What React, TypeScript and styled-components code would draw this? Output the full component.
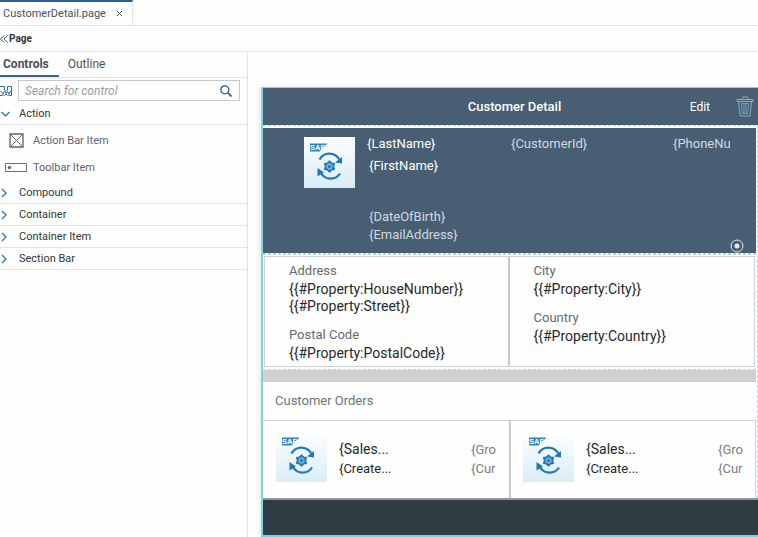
import React from "react";
import styled, { createGlobalStyle } from "styled-components";

const GlobalStyle = createGlobalStyle`
  *, *::before, *::after { box-sizing: border-box; }
  body { margin: 0; background: #fefefe; font-family: Roboto, "Liberation Sans", sans-serif; }
  button { margin: 0; padding: 0; border: 0; background: none; font: inherit; color: inherit; text-align: left; cursor: pointer; }
  h1, h2, p, dl, dt, dd, ul { margin: 0; padding: 0; font: inherit; list-style: none; }
`;

const line = "#dfe3ea";
const cyan = "#74d8e9";
const slate = "#475e73";

const Page = styled.div`
  min-height: 100vh;
  display: flex;
  flex-direction: column;
  color: #32363a;
  font-size: 11px;
  line-height: 16px;
`;

const FileTabs = styled.div`
  display: flex;
  height: 26px;
  border-bottom: 1px solid ${line};
`;

const FileTab = styled.div`
  display: flex;
  align-items: center;
  gap: 10px;
  padding: 0 9px 0 3px;
  border-top: 2px solid #2d5f8b;
  border-right: 1px solid ${line};
  color: #4b5057;
  svg { display: block; }
`;

const FileName = styled.button`
  font-size: 11px;
`;

const PageBar = styled.div`
  display: flex;
  align-items: center;
  height: 26px;
  border-bottom: 1px solid ${line};
  svg { display: block; }
`;

const PageTitle = styled.h1`
  padding-left: 1px;
  font-size: 10px;
  font-weight: 700;
`;

const Workspace = styled.div`
  flex: 1;
  display: flex;
`;

const Sidebar = styled.aside`
  flex: 0 0 auto;
  width: 248px;
  border-right: 1px solid ${line};
`;

const PanelTabs = styled.div`
  display: flex;
  gap: 9px;
  height: 26px;
  border-bottom: 1px solid ${line};
`;

const PanelTab = styled.button<{ $active?: boolean }>`
  padding: 0 ${(p) => (p.$active ? 10 : 0)}px 0 ${(p) => (p.$active ? 3 : 0)}px;
  border-bottom: 2px solid ${(p) => (p.$active ? "#3d6585" : "transparent")};
  font-size: 12px;
  font-weight: ${(p) => (p.$active ? 700 : 400)};
  color: #4b5057;
`;

const SearchRow = styled.div`
  display: flex;
  align-items: center;
  gap: 6px;
  padding: 2px 7px 2px 0;
  svg { display: block; flex: none; }
`;

const SearchBox = styled.label`
  flex: 1;
  display: flex;
  align-items: center;
  height: 21px;
  padding: 0 7px 0 6px;
  border: 1px solid #c3c7ce;
  background: #fff;
`;

const SearchInput = styled.input`
  flex: 1;
  min-width: 0;
  padding: 0;
  border: 0;
  outline: 0;
  background: none;
  font: italic 12px/16px Roboto, sans-serif;
  color: #32363a;
  &::placeholder { color: #9a9da2; opacity: 1; }
`;

const GroupButton = styled.button`
  display: flex;
  align-items: center;
  gap: 7px;
  width: 100%;
  height: 22px;
  border-bottom: 1px solid ${line};
  svg { display: block; }
`;

const ItemButton = styled.button`
  display: grid;
  grid-template-columns: 22px 1fr;
  align-items: center;
  gap: 6px;
  width: 100%;
  height: 27px;
  padding-left: 5px;
  color: #5f6368;
  svg { display: block; justify-self: center; }
`;

const ItemList = styled.ul`
  padding: 2px 0 1px;
`;

const Canvas = styled.main`
  flex: 1;
  min-width: 0;
  padding: 35px 0 0 13px;
`;

const Device = styled.section`
  border: solid ${cyan};
  border-width: 1px 0 2px 2px;
  box-shadow: -2px 0 4px rgba(0, 0, 0, 0.08);
  background: #fefefe;
  color: #26292c;
  font-size: 13px;
  line-height: 18px;
`;

const ActionBar = styled.header`
  display: grid;
  grid-template-columns: 1fr auto 1fr;
  align-items: center;
  height: 37px;
  padding: 0 4px 0 12px;
  background: ${slate};
  color: #fff;
`;

const BarTitle = styled.h2`
  grid-column: 2;
  font-size: 13px;
  font-weight: 500;
`;

const BarActions = styled.div`
  display: flex;
  align-items: center;
  justify-content: flex-end;
  gap: 26px;
  font-size: 12px;
  svg { display: block; }
`;

const DeviceBody = styled.div`
  border-right: 1px dashed #b5d9e8;
  padding-right: 1px;
`;

const DropZone = styled.div<{ $top?: number }>`
  padding-top: ${(p) => p.$top ?? 1}px;
  border: dashed #b9d5e0;
  border-width: 1px 0;
`;

const ObjectHeader = styled.div`
  position: relative;
  display: grid;
  grid-template-columns: 52px 133px 151px 57px;
  column-gap: 11px;
  min-height: 125px;
  padding: 7px 0 0 41px;
  background: ${slate};
  color: #d3d9df;
`;

const Tile = styled.div<{ $short?: boolean }>`
  width: 51px;
  height: ${(p) => (p.$short ? 46 : 51)}px;
  margin-top: 2px;
  overflow: hidden;
  background: linear-gradient(#fbfdfe, #d9edf6);
  svg { display: block; }
`;

const HeaderText = styled.div`
  white-space: nowrap;
`;

const Name = styled.p`
  color: #fff;
`;

const Details = styled.div`
  padding: 4px 0 0 2px;
`;

const Clipped = styled.p`
  overflow: hidden;
  white-space: nowrap;
`;

const Contact = styled.div`
  padding-top: 33px;
`;

const Target = styled.button`
  position: absolute;
  right: 12px;
  bottom: 0;
  svg { display: block; }
`;

const Facets = styled.div`
  display: grid;
  grid-template-columns: 1fr 1fr;
  margin: 0 1px 2px;
  border: 1px solid #cfd1d4;
`;

const Facet = styled.dl`
  padding: 4px 4px 4px 24px;
  &:first-child { border-right: 2px solid #c8c9cb; }
`;

const FacetLabel = styled.dt`
  line-height: 20px;
  color: #66696d;
`;

const FacetValue = styled.dd`
  font-size: 14px;
  line-height: 17px;
  & + dt { margin-top: 10px; }
`;

const Divider = styled.div`
  height: 12px;
  background: #d0d0d3;
`;

const SectionTitle = styled.h2`
  padding: 10px 12px;
  color: #707377;
`;

const Orders = styled.div`
  display: grid;
  grid-template-columns: 1fr 1fr;
  border: 1px solid #cfd1d4;
  border-width: 1px 1px 0 0;
`;

const Order = styled.article`
  display: grid;
  grid-template-columns: 51px 1fr auto;
  column-gap: 12px;
  padding: 13px 13px 16px 13px;
  & + & { border-left: 2px solid #c8c9cb; padding: 13px 12px 16px 12px; }
`;

const OrderText = styled.div<{ $muted?: boolean }>`
  padding-top: 6px;
  color: ${(p) => (p.$muted ? "#7b7d80" : "#26292c")};
`;

const OrderLine = styled.p<{ $lead?: boolean }>`
  font-size: ${(p) => (p.$lead ? 14 : 13)}px;
  line-height: 19px;
`;

const Toolbar = styled.footer`
  height: 37px;
  border-top: 2px solid #8a98a3;
  background: #303d45;
`;

function SapTile({ short }: { short?: boolean }) {
  return (
    <Tile $short={short}>
      <svg width="51" height="51" viewBox={short ? "0 5 51 51" : "0 0 51 51"} role="img" aria-label="SAP">
        <path d="M6 6.500H23.500L15.500 14.500H6Z" fill="#2b83c0" />
        <text x="6" y="13.300" fontFamily="Liberation Sans, sans-serif" fontSize="7.500" fontWeight="700" fill="#fff">SAP</text>
        <g fill="none" stroke="#2077b4" strokeWidth="2.200">
          <path d="M15.500 22.500C20 15 30 14.500 35.500 22.500" />
          <path d="M36 36.500C32 43 21.500 44 16.500 35.500" />
        </g>
        <path d="M38 20V26.500L31 25.500Z" fill="#2077b4" />
        <path d="M13.500 31L20 35.500L13.500 39.500Z" fill="#2077b4" />
        <path d="M25.500 25L29.500 27.200V31.800L25.500 34L21.500 31.800V27.200Z" fill="#77b3db" stroke="#2077b4" strokeWidth="1.800" />
        <circle cx="25.500" cy="29.500" r="1.500" fill="#2077b4" />
        <g fill="#2077b4">
          <circle cx="25.500" cy="24.800" r="1.300" /><circle cx="25.500" cy="34.200" r="1.300" />
          <circle cx="21.300" cy="27" r="1.300" /><circle cx="29.700" cy="27" r="1.300" />
          <circle cx="21.300" cy="32" r="1.300" /><circle cx="29.700" cy="32" r="1.300" />
        </g>
      </svg>
    </Tile>
  );
}

function Chevron({ open }: { open?: boolean }) {
  return (
    <svg width="12" height="12" viewBox="0 0 12 12" fill="none" stroke="#2f6c9c" strokeWidth="1.200">
      <path d={open ? "M1.500 4L5.500 8L9.500 4" : "M2 2L6 6L2 10"} />
    </svg>
  );
}

const Group = ({ label, open }: { label: string; open?: boolean }) => (
  <GroupButton aria-expanded={!!open}>
    <Chevron open={open} />
    {label}
  </GroupButton>
);

const orders = [1, 2];

export default function App() {
  return (
    <Page>
      <GlobalStyle />
      <FileTabs>
        <FileTab>
          <FileName>CustomerDetail.page</FileName>
          <button aria-label="Close">
            <svg width="7" height="7" viewBox="0 0 7 7" stroke="#4b5057"><path d="M1 1L6 6M6 1L1 6" /></svg>
          </button>
        </FileTab>
      </FileTabs>
      <PageBar>
        <button aria-label="Collapse">
          <svg width="8" height="8" viewBox="0 0 8 8" fill="none" stroke="#4b5057"><path d="M4 0.500L0.500 4L4 7.500M7.500 0.500L4 4L7.500 7.500" /></svg>
        </button>
        <PageTitle>Page</PageTitle>
      </PageBar>
      <Workspace>
        <Sidebar>
          <PanelTabs role="tablist">
            <PanelTab role="tab" aria-selected $active>Controls</PanelTab>
            <PanelTab role="tab" aria-selected={false}>Outline</PanelTab>
          </PanelTabs>
          <SearchRow>
            <button aria-label="Control catalog">
              <svg width="12" height="12" viewBox="0 0 12 12" fill="none" stroke="#2f6c9c">
                <path d="M0 1.500H4.500V5L6 6.500L7.500 5V1.500H11.500V10.500H9.500M0 10.500H2M0.500 6L3 8.500L4.500 6.500L6 8.500L7.500 6.500L9 8.500L11 6M3 8V11M9 8V11M4.500 10.500L6 9L7.500 10.500" />
              </svg>
            </button>
            <SearchBox>
              <SearchInput type="text" placeholder="Search for control" aria-label="Search for control" />
              <svg width="12" height="12" viewBox="0 0 12 12" fill="none" stroke="#25567f" strokeWidth="1.300"><circle cx="4.800" cy="4.800" r="4" /><path d="M7.800 7.800L11.500 11.500" strokeWidth="1.600" /></svg>
            </SearchBox>
          </SearchRow>
          <Group label="Action" open />
          <ItemList>
            <li>
              <ItemButton>
                <svg width="15" height="15" viewBox="0 0 15 15" fill="none" stroke="#5f6368"><path d="M1 1H14V14H1Z" strokeWidth="1.300" /><path d="M1.500 1.500L13.500 13.500M13.500 1.500L1.500 13.500" /></svg>
                Action Bar Item
              </ItemButton>
            </li>
            <li>
              <ItemButton>
                <svg width="22" height="9" viewBox="0 0 22 9" fill="none" stroke="#6c7075"><path d="M0.500 0.500H21.500V8.500H0.500Z" /><circle cx="4.500" cy="4.500" r="1.300" fill="#5f6368" /></svg>
                Toolbar Item
              </ItemButton>
            </li>
          </ItemList>
          <Group label="Compound" />
          <Group label="Container" />
          <Group label="Container Item" />
          <Group label="Section Bar" />
        </Sidebar>
        <Canvas>
          <Device>
            <ActionBar>
              <BarTitle>Customer Detail</BarTitle>
              <BarActions>
                <button>Edit</button>
                <button aria-label="Delete">
                  <svg width="18" height="21" viewBox="0 0 18 21" fill="none" stroke="#8fa9bf">
                    <path d="M1 3.500H17V5.500H1ZM5.500 3.500L6.500 1H11.500L12.500 3.500M2.500 5.500L4 20H14L15.500 5.500" />
                    <path d="M5.500 7.500L6.200 17.500H11.800L12.500 7.500ZM8 7.500V17.500M10 7.500V17.500" stroke="#6f9dc6" />
                  </svg>
                </button>
              </BarActions>
            </ActionBar>
            <DeviceBody>
              <DropZone $top={2}>
                <ObjectHeader>
                  <SapTile />
                  <HeaderText>
                    <Name>{"{LastName}"}</Name>
                    <Details>
                      <Name>{"{FirstName}"}</Name>
                      <Contact>
                        <p>{"{DateOfBirth}"}</p>
                        <p>{"{EmailAddress}"}</p>
                      </Contact>
                    </Details>
                  </HeaderText>
                  <Clipped>{"{CustomerId}"}</Clipped>
                  <Clipped>{"{PhoneNu"}</Clipped>
                  <Target aria-label="Drop target">
                    <svg width="14" height="14" viewBox="0 0 14 14" fill="none" stroke="#e3e8ec"><circle cx="7" cy="7" r="6" /><circle cx="7" cy="7" r="2.500" fill="#e3e8ec" stroke="none" /></svg>
                  </Target>
                </ObjectHeader>
              </DropZone>
              <DropZone>
                <Facets>
                  <Facet>
                    <FacetLabel>Address</FacetLabel>
                    <FacetValue>{"{{#Property:HouseNumber}}"}</FacetValue>
                    <FacetValue>{"{{#Property:Street}}"}</FacetValue>
                    <FacetLabel>Postal Code</FacetLabel>
                    <FacetValue>{"{{#Property:PostalCode}}"}</FacetValue>
                  </Facet>
                  <Facet>
                    <FacetLabel>City</FacetLabel>
                    <FacetValue>{"{{#Property:City}}"}</FacetValue>
                    <FacetLabel>Country</FacetLabel>
                    <FacetValue>{"{{#Property:Country}}"}</FacetValue>
                  </Facet>
                </Facets>
              </DropZone>
              <Divider />
              <SectionTitle>Customer Orders</SectionTitle>
              <Orders>
                {orders.map((id) => (
                  <Order key={id}>
                    <SapTile short />
                    <OrderText>
                      <OrderLine $lead>{"{Sales..."}</OrderLine>
                      <OrderLine>{"{Create..."}</OrderLine>
                    </OrderText>
                    <OrderText $muted>
                      <OrderLine>{"{Gro"}</OrderLine>
                      <OrderLine>{"{Cur"}</OrderLine>
                    </OrderText>
                  </Order>
                ))}
              </Orders>
            </DeviceBody>
            <Toolbar />
          </Device>
        </Canvas>
      </Workspace>
    </Page>
  );
}
